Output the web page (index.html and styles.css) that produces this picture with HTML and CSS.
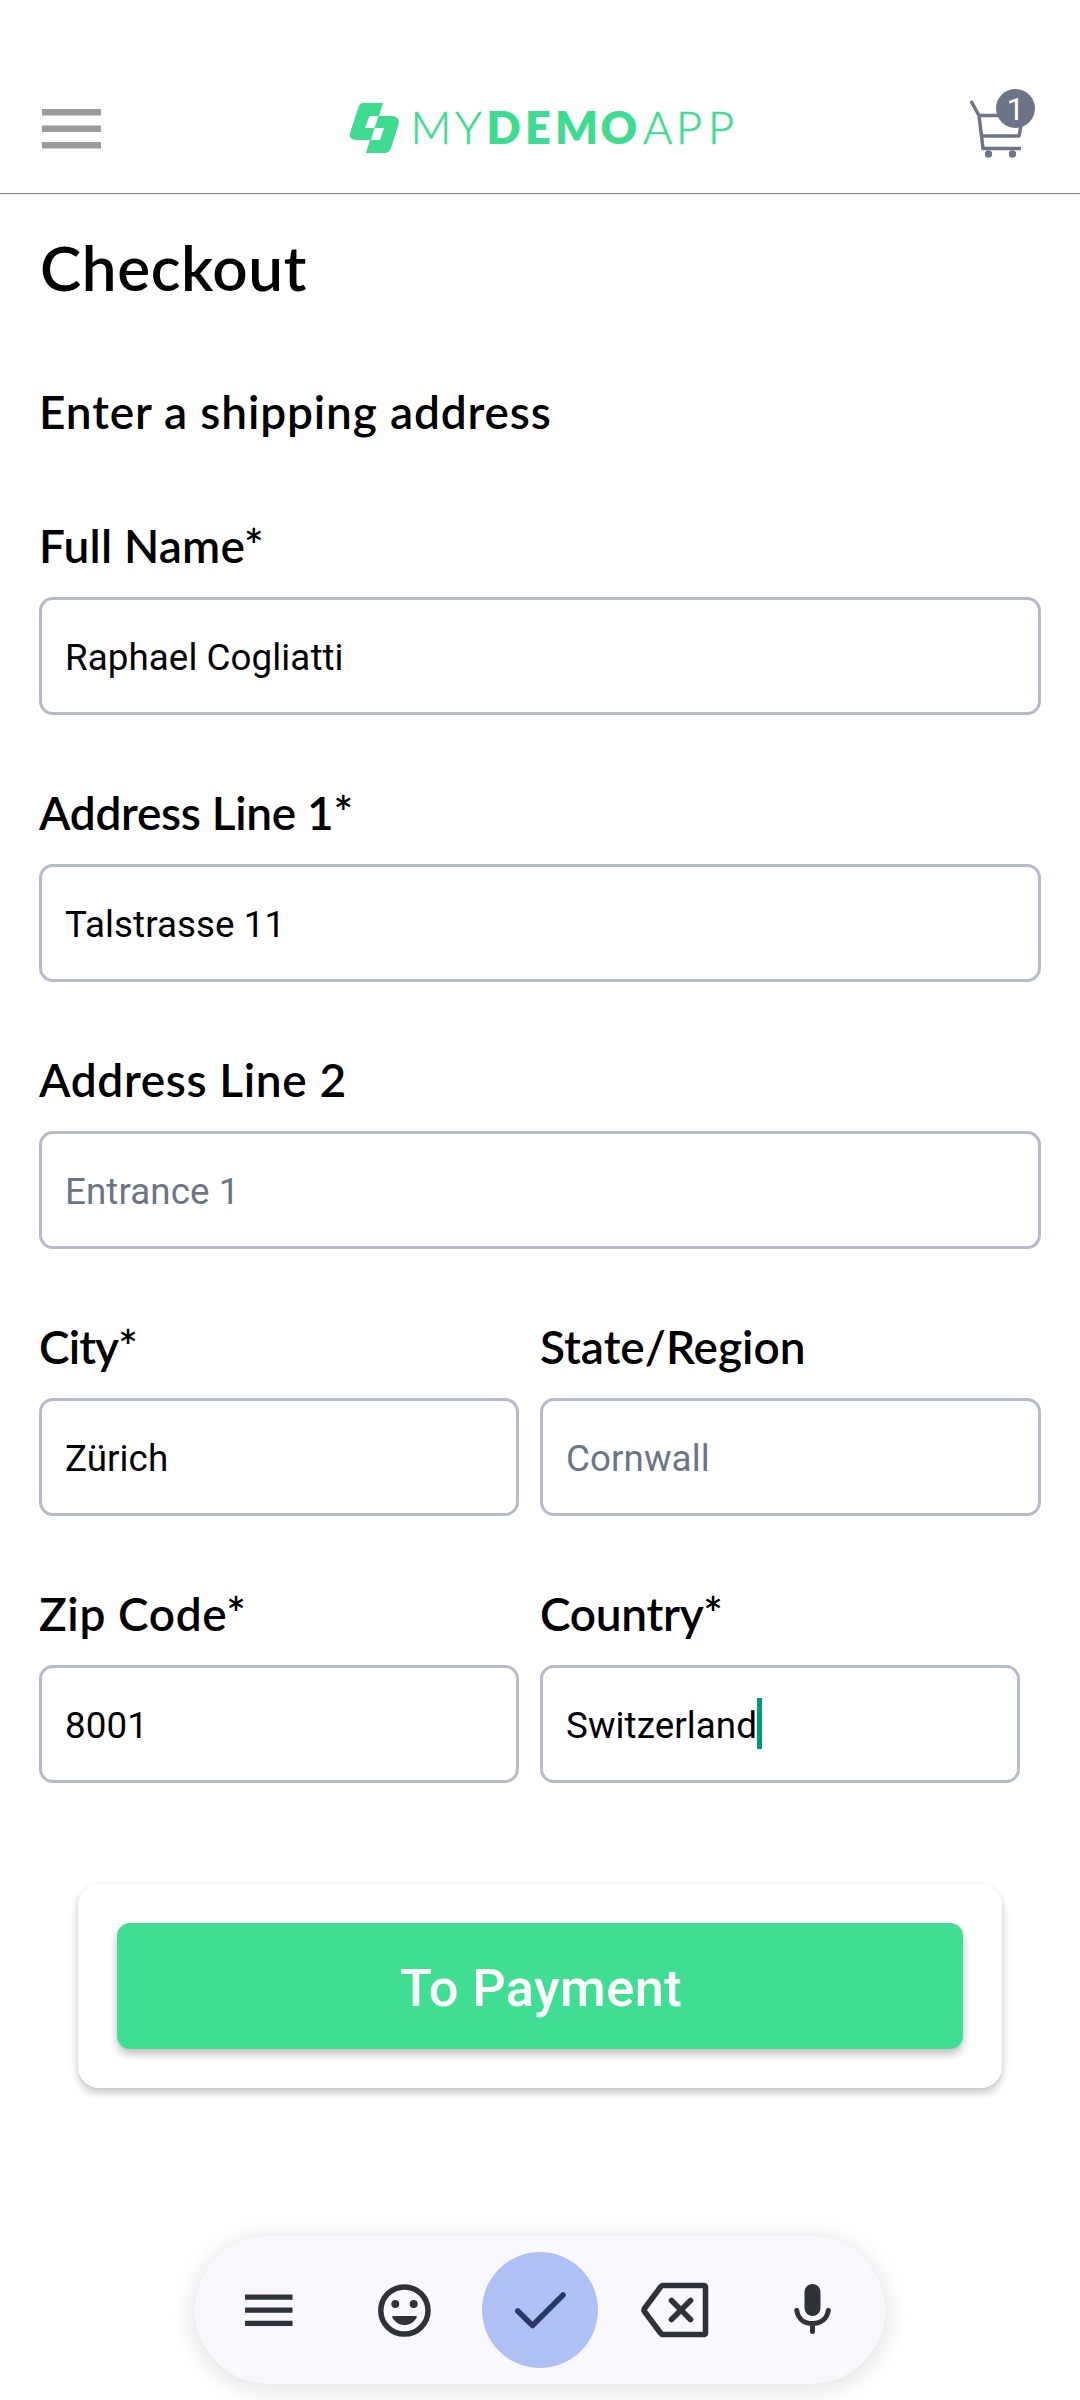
FILE: index.html
```
<!DOCTYPE html>
<html lang="en">
<head>
<meta charset="utf-8">
<title>My Demo App - Checkout</title>
<link rel="stylesheet" href="styles.css">
</head>
<body>
<header class="header">
  <svg class="menu" width="60" height="42" viewBox="0 0 60 42" fill="#9b9b9b">
    <path d="M1 1h59v6.500H1zM1 17.500h59v6.500H1zM1 34h59v6.500H1z"/>
  </svg>
  <svg class="logo" width="390" height="60" viewBox="0 0 390 60" fill="#3ddc91">
    <path fill-rule="evenodd" d="M14.500 5H34L30 18H42.500C47.500 18 51 21 49.500 26.500L42 50C41 53 38.500 55 35.500 55H17L21 42H7C2 42 0 39 1 35L9.500 9C10.500 6.500 12 5 14.500 5ZM20.500 18L16 30H25.500L29.500 18ZM25.500 30L22 42H31L35 30Z"/>
    <g font-family="Lato, sans-serif" font-size="45">
      <text class="light" x="61.500 106" y="46.300">MY</text>
      <text class="heavy" x="137.500 176 206 251.500" y="46.300">DEMO</text>
      <text class="light" x="294 327 359" y="46.300">APP</text>
    </g>
  </svg>
  <div class="cart">
    <svg width="66" height="72" viewBox="0 0 66 72" fill="none" stroke="#6c7587" stroke-width="3.500">
      <path d="M2 13L10 27.500H54L50 48H13M10 27.500L14 60.500H52" stroke-linejoin="round"/>
      <circle cx="19.500" cy="66" r="3.700" fill="#6c7587" stroke="none"/>
      <circle cx="43.500" cy="66" r="3.700" fill="#6c7587" stroke="none"/>
    </svg>
    <span class="badge">1</span>
  </div>
</header>
<main class="content">
  <h1 class="title">Checkout</h1>
  <h2 class="label subtitle ls-l">Enter a shipping address</h2>
  <div class="form">
    <div class="field"><div class="label ls-s">Full Name*</div><div class="input"><span>Raphael Cogliatti</span></div></div>
    <div class="field"><div class="label ls-n">Address Line 1*</div><div class="input"><span>Talstrasse 11</span></div></div>
    <div class="field"><div class="label ls-m">Address Line 2</div><div class="input placeholder"><span>Entrance 1</span></div></div>
    <div class="row">
      <div class="field"><div class="label ls-t">City*</div><div class="input"><span>Zürich</span></div></div>
      <div class="field"><div class="label">State/Region</div><div class="input placeholder"><span>Cornwall</span></div></div>
    </div>
    <div class="row">
      <div class="field"><div class="label ls-m">Zip Code*</div><div class="input"><span>8001</span></div></div>
      <div class="field"><div class="label ls-n">Country*</div><div class="input narrow"><span>Switzerland</span><i class="caret"></i></div></div>
    </div>
  </div>
  <div class="card"><div class="button"><span>To Payment</span></div></div>
</main>
<nav class="toolbar">
  <div class="tool"><svg width="80" height="80" viewBox="0 0 80 80" fill="#2e323b"><path d="M17 24.500h47.500v5.300H17zM17 37.500h47.500v5.300H17zM17 50.800h47.500v5.300H17z"/></svg></div>
  <div class="tool"><svg width="80" height="80" viewBox="0 0 80 80" fill="#2e323b"><circle cx="40.400" cy="40.500" r="23.600" fill="none" stroke="#2e323b" stroke-width="5.500"/><circle cx="31.300" cy="34" r="4"/><circle cx="49.700" cy="34" r="4"/><path d="M29.500 46H51.500Q53.500 46 52.500 48C49.500 52.500 45.500 55 40.500 55S31.500 52.500 28.500 48Q27.500 46 29.500 46Z"/></svg></div>
  <div class="tool"><div class="enter"><svg width="80" height="80" viewBox="0 0 80 80" fill="none" stroke="#283a64" stroke-width="5.500" stroke-linecap="round" stroke-linejoin="round"><path d="M17.800 41L32.500 55.500L63 25"/></svg></div></div>
  <div class="tool"><svg width="80" height="80" viewBox="0 0 80 80" fill="none" stroke="#2e323b" stroke-width="5.600" stroke-linecap="round" stroke-linejoin="round"><path d="M26.700 15.500H67.500Q69.500 15.500 69.500 17.500V62.500Q69.500 64.500 67.500 64.500H26.700Q25.500 64.500 24.500 63L8.500 41.500Q7.500 40 8.500 38.500L24.500 17Q25.500 15.500 26.700 15.500ZM35.500 30.500L54.500 49.500M54.500 30.500L35.500 49.500"/></svg></div>
  <div class="tool"><svg width="80" height="80" viewBox="0 0 80 80" fill="none" stroke="#2e323b" stroke-width="5" stroke-linecap="round"><rect x="32.500" y="14" width="16" height="32" rx="8" fill="#2e323b" stroke="none"/><path d="M24.800 40.500C26 48.500 32 53.500 40.500 53.500S55 48.500 56.300 40.500M40.500 54V61.500"/></svg></div>
</nav>
</body>
</html>
```
FILE: styles.css
```
* { box-sizing: border-box; }
body {
  margin: 0;
  width: 1080px;
  height: 2400px;
  overflow: hidden;
  background: #fff;
  color: #000;
  font-family: Roboto, sans-serif;
}
.header {
  display: flex;
  justify-content: space-between;
  height: 194px;
  padding: 0 45px 0 41px;
  border-bottom: 1px solid #757575;
}
.menu { margin-top: 108px; }
.logo { margin: 98px 0 0 18px; }
.light { font-weight: 300; stroke: #3ddc91; stroke-width: 0.6px; }
.heavy { font-weight: 800; }
.cart { position: relative; width: 66px; margin-top: 88px; }
.badge {
  position: absolute;
  left: 27px;
  top: 1px;
  width: 39px;
  height: 39px;
  border-radius: 50%;
  background: #6c7587;
  color: #fff;
  font-size: 31px;
  line-height: 41px;
  text-align: center;
}
.content { padding: 35px 39px 0; }
.title {
  margin: 0 0 79px;
  padding-left: 1px;
  font: 600 62px/76px Lato, sans-serif;
  letter-spacing: 0.6px;
}
.label {
  font: 600 46px/56px Lato, sans-serif;
  white-space: nowrap;
}
.subtitle { margin: 0 0 78px; }
.ls-l { letter-spacing: 0.85px; }
.ls-m { letter-spacing: 0.65px; }
.ls-s { letter-spacing: 0.2px; }
.ls-n { letter-spacing: -0.3px; }
.ls-t { letter-spacing: -0.9px; }
.form { display: flex; flex-direction: column; gap: 69px; }
.field { display: flex; flex-direction: column; gap: 24px; }
.row { display: grid; grid-template-columns: 480px 501px; gap: 21px; }
.input {
  display: flex;
  align-items: center;
  height: 118px;
  margin-top: -1px;
  margin-bottom: 1px;
  padding-left: 23px;
  border: 3px solid #b4bccc;
  border-radius: 14px;
  font-size: 36.75px;
  letter-spacing: 0.07px;
}
.input span { padding-top: 2px; }
.placeholder { color: #6c7587; }
.narrow { width: 480px; }
.caret { width: 5px; height: 51px; margin-top: -1px; background: #009a74; }
.card {
  margin: 100px 39px 0;
  padding: 39px;
  border-radius: 21px;
  background: #fff;
  box-shadow: 0 5px 8px rgba(0, 0, 0, 0.22), 0 0 3px rgba(0, 0, 0, 0.06);
}
.button {
  display: flex;
  align-items: center;
  justify-content: center;
  height: 126px;
  border-radius: 13px;
  background: #3fde93;
  box-shadow: 0 5px 8px rgba(0, 0, 0, 0.25);
  color: #fff;
  font-size: 52.5px;
  font-weight: 500;
  letter-spacing: 0.35px;
}
.button span { padding: 3px 0 0 2px; }
.toolbar {
  display: flex;
  align-items: center;
  width: 690px;
  height: 148px;
  margin: 148px auto 0;
  padding: 0 5px;
  border-radius: 74px;
  background: #faf8ff;
  box-shadow: 0 4px 28px rgba(0, 0, 0, 0.13);
}
.tool {
  display: flex;
  flex: 1;
  align-items: center;
  justify-content: center;
}
.enter {
  display: flex;
  align-items: center;
  justify-content: center;
  width: 116px;
  height: 116px;
  border-radius: 50%;
  background: #aec0f4;
}
```
